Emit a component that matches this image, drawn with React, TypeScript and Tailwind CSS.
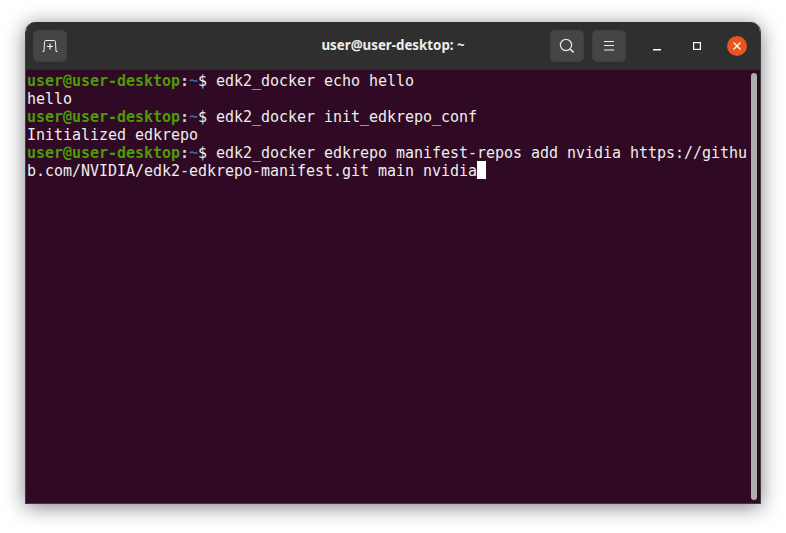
function Prompt() {
  return (
    <>
      <span className="font-bold text-[#4e9a06]">user@user-desktop</span>
      <span className="font-bold text-[#d3d7cf]">:</span>
      <span className="font-bold text-[#3465a4]">~</span>
      <span>$ </span>
    </>
  );
}

function HeaderButton({ children }: { children: React.ReactNode }) {
  return (
    <div className="flex h-[32px] w-[34px] items-center justify-center rounded-[5px] border border-[#404040] bg-[#454545]">
      {children}
    </div>
  );
}

export default function App() {
  return (
    <div className="h-[533px] w-[786px] overflow-hidden bg-white pl-[25px] pt-[22px]">
      <div className="flex h-[482px] w-[736px] flex-col overflow-hidden rounded-t-[10px] border-x border-b border-[#3d3d3d] shadow-[0_3px_20px_rgba(0,0,0,0.5)]">
        {/* Title bar */}
        <header className="-mx-px flex h-[48px] shrink-0 items-center border-b border-[#262626] bg-[#2f2f2f] px-[14px] font-['Noto_Sans',sans-serif]">
          <div className="-ml-[6px] mr-[6px] flex flex-1">
            <HeaderButton>
              <svg width="16" height="12" viewBox="0 0 16 12" fill="none" stroke="#eeeeec" strokeWidth="1">
                <path d="M0.5 11.5h1.5l.6-10q0-1 1-1h8.8q1 0 1 1l.6 10h1.5" />
                <path d="M8 3.5v6M5 6.5h6" strokeWidth="1.2" />
              </svg>
            </HeaderButton>
          </div>
          <div className="text-center text-[13.3px] font-bold leading-none text-[#eeeeec]">
            user@user-desktop: ~
          </div>
          <div className="flex flex-1 items-center justify-end">
            <div className="flex items-center gap-[8px]">
              <HeaderButton>
                <svg width="16" height="16" viewBox="0 0 16 16" fill="none" stroke="#e4e4e4" strokeWidth="1.3">
                  <circle cx="7" cy="7" r="5.6" />
                  <path d="M11 11l3.6 3.4" strokeWidth="1.7" />
                </svg>
              </HeaderButton>
              <HeaderButton>
                <svg width="12" height="10" viewBox="0 0 12 10" fill="none" stroke="#eeeeec" strokeWidth="1">
                  <path d="M1 .5h10M1 4.5h10M1 9h10" />
                </svg>
              </HeaderButton>
            </div>
            <div className="ml-[27px] flex h-[10px] items-end">
              <svg width="8" height="2" viewBox="0 0 8 2"><rect width="8" height="1.5" fill="#ffffff" /></svg>
            </div>
            <svg className="ml-[32px]" width="8" height="8" viewBox="0 0 8 8" fill="none" stroke="#ffffff" strokeWidth="1.2">
              <rect x=".6" y=".6" width="6.8" height="6.8" />
            </svg>
            <div className="ml-[26px] flex h-[20px] w-[20px] items-center justify-center rounded-full bg-[#e95420]">
              <svg width="8" height="8" viewBox="0 0 8 8" fill="none" stroke="#ffffff" strokeWidth="1.3">
                <path d="M.5 .5l7 7M7.5 .5l-7 7" />
              </svg>
            </div>
          </div>
        </header>

        {/* Terminal */}
        <main className="relative flex-1 bg-[#300a24] pl-[1px] pt-[2px] font-['DejaVu_Sans_Mono',monospace] text-[15px] leading-[18px] tracking-[-0.03px] text-[#eeeeec] whitespace-pre">
          <div><Prompt />edk2_docker echo hello</div>
          <div>hello</div>
          <div><Prompt />edk2_docker init_edkrepo_conf</div>
          <div>Initialized edkrepo</div>
          <div><Prompt />edk2_docker edkrepo manifest-repos add nvidia https://githu</div>
          <div className="flex">
            b.com/NVIDIA/edk2-edkrepo-manifest.git main nvidia
            <span className="-mt-px h-[18px] w-[9px] bg-white" />
          </div>
          <div className="absolute bottom-[3px] right-[3px] top-[3px] w-[6px] rounded-full bg-[#b1aeb0]" />
        </main>
      </div>
    </div>
  );
}
